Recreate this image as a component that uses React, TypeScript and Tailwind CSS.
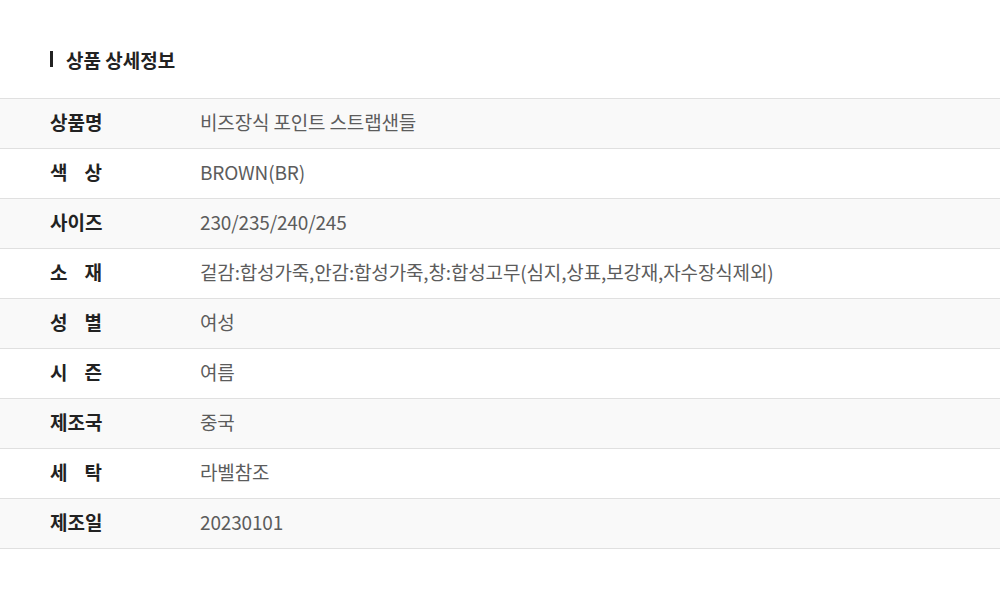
const rows: { label: string[]; value: string }[] = [
  { label: ['상품명'], value: '비즈장식 포인트 스트랩샌들' },
  { label: ['색', '상'], value: 'BROWN(BR)' },
  { label: ['사이즈'], value: '230/235/240/245' },
  { label: ['소', '재'], value: '겉감:합성가죽,안감:합성가죽,창:합성고무(심지,상표,보강재,자수장식제외)' },
  { label: ['성', '별'], value: '여성' },
  { label: ['시', '즌'], value: '여름' },
  { label: ['제조국'], value: '중국' },
  { label: ['세', '탁'], value: '라벨참조' },
  { label: ['제조일'], value: '20230101' },
];

export default function App() {
  return (
    <div className="w-[1000px] h-[598px] bg-white pt-[47px] font-['Noto_Sans_CJK_KR','Noto_Sans',sans-serif]">
      {/* Section heading */}
      <div className="flex items-center gap-[13px] px-[50px] h-[24px]">
        <span className="w-[3px] h-[16px] bg-[#222]" />
        <h2 className="text-[19px] font-bold text-[#222] leading-none">상품 상세정보</h2>
      </div>

      <div className="mt-[27px] border-t border-[#e0e0e0]">
        {rows.map((row, i) => (
          <div
            key={i}
            className={`flex items-center h-[50px] pb-[2px] border-b border-[#e0e0e0] ${i % 2 === 0 ? 'bg-[#f9f9f9]' : 'bg-white'}`}
          >
            <div className="w-[200px] shrink-0 pl-[50px]">
              <div className="min-w-[52px] w-fit flex justify-between whitespace-nowrap text-[19px] font-bold text-[#222]">
                {row.label.map((t, j) => (
                  <span key={j}>{t}</span>
                ))}
              </div>
            </div>
            <div className="text-[19px] text-[#5c5c5c] tracking-[-0.15px] whitespace-nowrap">{row.value}</div>
          </div>
        ))}
      </div>
    </div>
  );
}
